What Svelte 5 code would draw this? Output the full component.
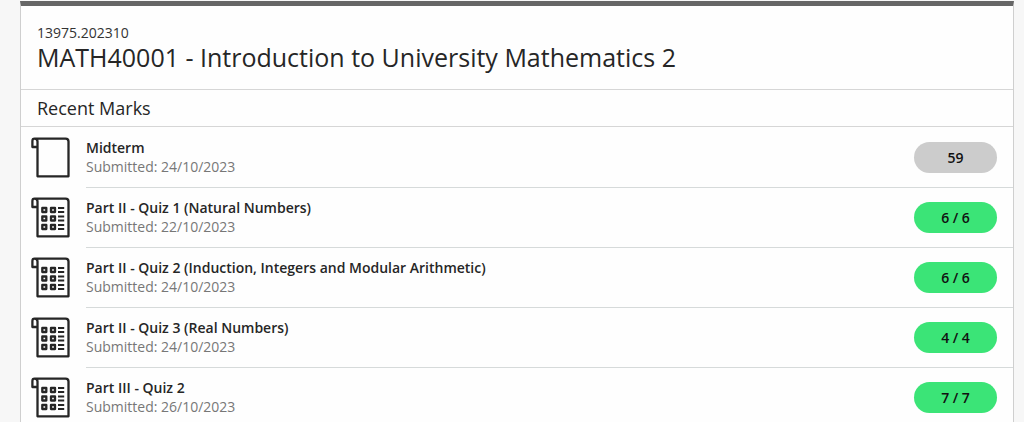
<script lang="ts">
  interface Mark {
    title: string;
    submitted: string;
    score: string;
    type: "assignment" | "quiz";
  }

  const marks: Mark[] = [
    { title: "Midterm", submitted: "24/10/2023", score: "59", type: "assignment" },
    { title: "Part II - Quiz 1 (Natural Numbers)", submitted: "22/10/2023", score: "6 / 6", type: "quiz" },
    {
      title: "Part II - Quiz 2 (Induction, Integers and Modular Arithmetic)",
      submitted: "24/10/2023",
      score: "6 / 6",
      type: "quiz",
    },
    { title: "Part II - Quiz 3 (Real Numbers)", submitted: "24/10/2023", score: "4 / 4", type: "quiz" },
    { title: "Part III - Quiz 2", submitted: "26/10/2023", score: "7 / 7", type: "quiz" },
  ];

  // vertical centres of the question rows inside the quiz icon
  const gridRows = [13, 21.5, 30];
</script>

<main class="page">
  <section class="course">
    <header class="course-header">
      <p class="course-id">13975.202310</p>
      <h1 class="course-title">MATH40001 - Introduction to University Mathematics 2</h1>
    </header>

    <h2 class="section-title">Recent Marks</h2>

    <ul class="marks">
      {#each marks as mark}
        <li class="mark">
          <svg class="icon" viewBox="0 0 40 42" aria-hidden="true">
            <path d="M7.5 10V39.3H38.5V4.5Q38.5 1.7 35.5 1.7H4.5Q7.5 1.7 7.5 4.5V10H2.4V4Q2.4 1.7 4.5 1.7" />
            {#if mark.type === "quiz"}
              {#each gridRows as y}
                <rect x="12.3" y={y - 2} width="4" height="4" />
                <rect x="21" y={y - 2} width="4" height="4" />
                <path class="line" d="M28 {y - 2}h6.2M28 {y + 2}h6.2" />
              {/each}
            {/if}
          </svg>
          <div class="mark-body">
            <div class="mark-text">
              <h3 class="mark-title">{mark.title}</h3>
              <p class="submitted">Submitted: {mark.submitted}</p>
            </div>
            <span class="score" class:graded={mark.type === "quiz"}>{mark.score}</span>
          </div>
        </li>
      {/each}
    </ul>
  </section>
</main>

<style>
  :global(body) {
    background: #f7f7f7;
  }
  :global(html) {
    overflow: hidden;
  }
  .page {
    padding: 1px 10px 0 20px;
    font-family: "Open Sans", "Noto Sans", sans-serif;
    color: #262626;
  }
  .course {
    background: #fefefe;
    border: 1px solid #cfcfcf;
    border-top: 5px solid #666;
  }
  .course-header {
    padding: 18px 16px 17px;
    border-bottom: 1px solid #d6d6d6;
  }
  h1, h2, h3, p, ul {
    margin: 0;
    padding: 0;
  }
  .course-id {
    font-size: 14px;
    line-height: 18px;
    color: #333;
  }
  .course-title {
    font-size: 25px;
    font-weight: 400;
    line-height: 30px;
  }
  .section-title {
    padding: 6px 16px;
    font-size: 18px;
    font-weight: 400;
    line-height: 24px;
    border-bottom: 1px solid #d6d6d6;
  }
  .marks {
    padding-top: 1px;
    list-style: none;
  }
  .mark {
    display: flex;
    align-items: center;
    padding-left: 9px;
  }
  .icon {
    flex: none;
    width: 40px;
    height: 42px;
    margin-right: 16px;
    fill: none;
    stroke: #262626;
    stroke-width: 2.3;
    stroke-linejoin: round;
  }
  .icon .line {
    stroke-width: 1.9;
  }
  .mark-body {
    display: flex;
    flex: 1;
    align-items: center;
    justify-content: space-between;
    padding: 10px 16px 11px 0;
    border-bottom: 1px solid #d6dada;
  }
  .mark-title {
    font-size: 14px;
    font-weight: 600;
    line-height: 20px;
  }
  .submitted {
    font-size: 14px;
    line-height: 18px;
    color: #777;
  }
  .score {
    width: 83px;
    border-radius: 16px;
    background: #ccc;
    color: #111;
    font-size: 14px;
    font-weight: 600;
    line-height: 31px;
    text-align: center;
  }
  .graded {
    background: #3be477;
  }
</style>
